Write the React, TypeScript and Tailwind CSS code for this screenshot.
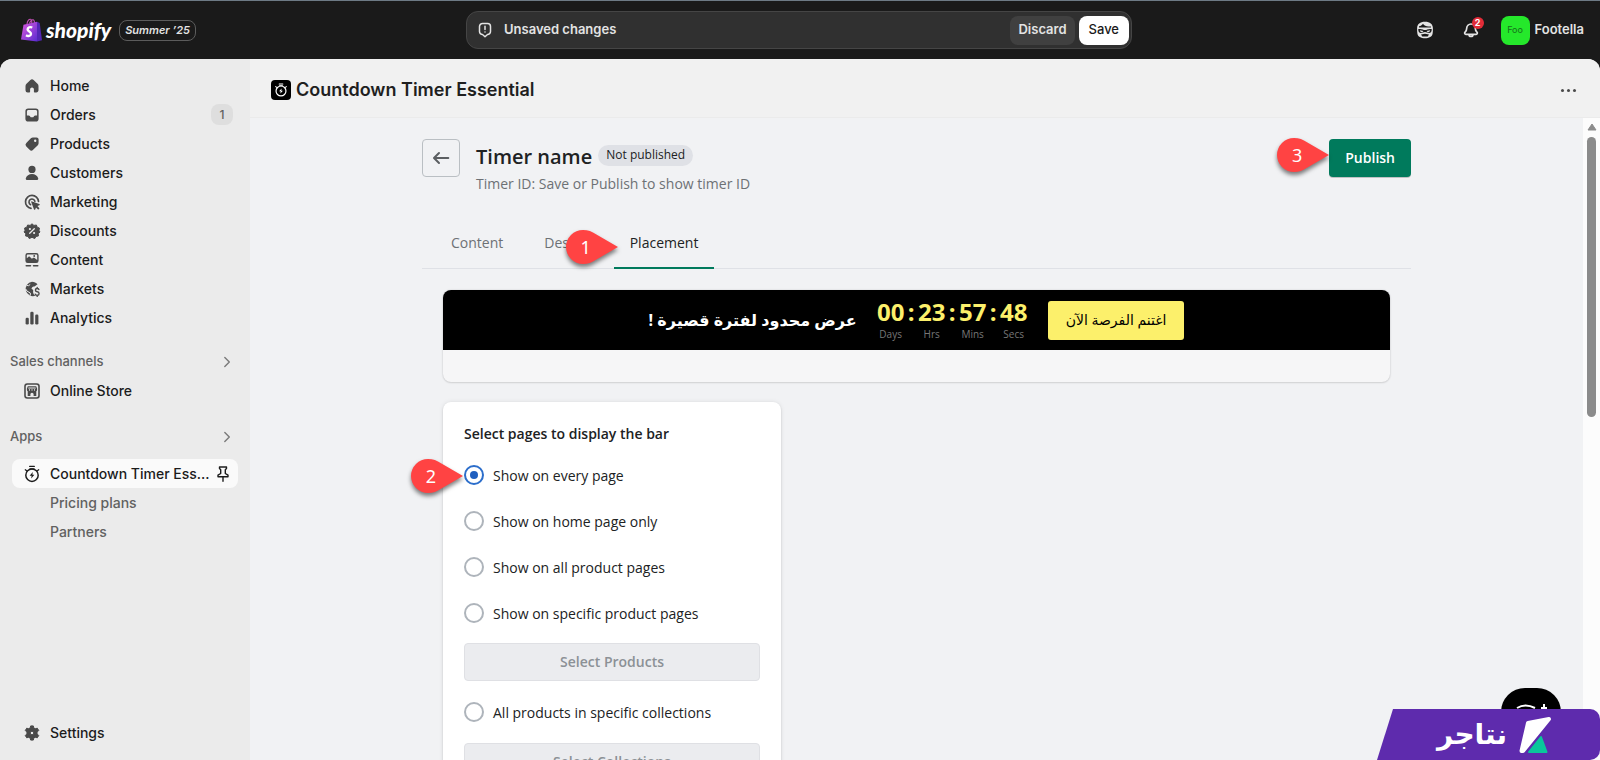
import { useState, type ReactNode } from "react";

const shell = "font-[Inter,'Liberation_Sans',sans-serif]";
const page = "font-['Open_Sans','Noto_Sans','DejaVu_Sans',sans-serif]";

function Icon({ children, className = "size-5" }: { children: ReactNode; className?: string }) {
  return (
    <svg viewBox="0 0 20 20" className={`shrink-0 ${className}`} fill="currentColor" aria-hidden="true">
      {children}
    </svg>
  );
}

const stroke = { fill: "none", stroke: "currentColor", strokeWidth: 1.5, strokeLinecap: "round", strokeLinejoin: "round" } as const;

const icons = {
  home: (
    <path d="M8.4 4.1a2.3 2.3 0 0 1 3.2 0l3.9 3.6c.6.6 1 1.4 1 2.3v4.3c0 1.2-1 2.2-2.2 2.2h-1.600a.8.8 0 0 1-.8-.8v-2.400a1.900 1.900 0 0 0-3.800 0v2.400c0 .5-.3.8-.8.8H5.700a2.200 2.200 0 0 1-2.200-2.200V10c0-.9.400-1.700 1-2.300z" />
  ),
  orders: (
    <path
      fillRule="evenodd"
      d="M6.200 3.500h7.600a2.800 2.800 0 0 1 2.800 2.800v7.500a2.800 2.800 0 0 1-2.800 2.800H6.200a2.800 2.800 0 0 1-2.800-2.800V6.300a2.800 2.800 0 0 1 2.800-2.800zM6.400 5c-.8 0-1.500.7-1.500 1.500v3.900h1.800c.5 0 .9.200 1.200.6l.6.9c.2.200.4.300.7.300h1.600c.3 0 .5-.1.7-.3l.6-.9c.3-.4.700-.6 1.200-.6h1.800V6.500c0-.8-.7-1.500-1.500-1.500z"
    />
  ),
  products: (
    <path
      fillRule="evenodd"
      d="M10.900 3.500h3.600c1.200 0 2.100.9 2.100 2.100v3.600c0 .8-.3 1.500-.8 2.000l-4.700 4.600a2.500 2.500 0 0 1-3.500 0l-3.300-3.300a2.500 2.500 0 0 1 0-3.500l4.600-4.700c.5-.5 1.300-.8 2.000-.8zm2.300 4.500a1.200 1.200 0 1 0 0-2.400 1.200 1.200 0 0 0 0 2.400z"
    />
  ),
  customers: (
    <>
      <circle cx="10" cy="6.400" r="3.600" />
      <path d="M3.800 15.200c.7-2.500 3.200-4.200 6.200-4.200s5.500 1.700 6.200 4.200c.3 1-.5 1.800-1.500 1.800H5.300c-1 0-1.800-.8-1.500-1.800z" />
    </>
  ),
  marketing: (
    <>
      <path {...stroke} strokeWidth="1.700" d="M9 16.300A6.500 6.500 0 1 1 16.500 9.400" />
      <path {...stroke} strokeWidth="1.600" d="M8.600 12.700a3 3 0 1 1 4.300-3.400" />
      <path d="M10.100 9.400l7.200 2.700c.6.200.6 1 0 1.200l-1.900.8 1.800 1.800c.3.300.3.600 0 .9l-.5.500c-.3.300-.6.300-.9 0L14 15.500l-.8 1.900c-.2.600-1 .5-1.200 0l-2.700-7.200c-.2-.5.300-1 .8-.8z" />
    </>
  ),
  discounts: (
    <>
      <path
        stroke="currentColor"
        strokeLinejoin="round"
        d="M10 2.800l1.900 1.600 2.500-.4.800 2.200 2.200.8-.4 2.400 1 1.600-1.800 1.600.2 2.400-2.400.4-1.300 2.200L10 16.300l-2.700 1.300L6 15.400l-2.400-.4.200-2.400L2 11l1-1.600L2.600 7l2.200-.8.800-2.200 2.500.4z"
      />
      <path stroke="#ebebeb" strokeWidth="1.300" strokeLinecap="round" d="M7.700 12.300l4.600-4.600" />
      <circle cx="7.900" cy="8" r="1.100" fill="#ebebeb" />
      <circle cx="12.100" cy="12" r="1.100" fill="#ebebeb" />
    </>
  ),
  content: (
    <>
      <path
        fillRule="evenodd"
        d="M5.700 3h8.600a2.300 2.300 0 0 1 2.300 2.300v5.400a2.300 2.300 0 0 1-2.300 2.300H5.700a2.300 2.300 0 0 1-2.300-2.300V5.300A2.300 2.300 0 0 1 5.700 3zm0 1.400a.9.900 0 0 0-.9.900v3l1.500-1.400c.5-.4 1.200-.4 1.700 0l1.900 1.800 1-.7c.5-.4 1.200-.4 1.700 0l2.600 1.900V5.300a.9.900 0 0 0-.9-.9zm6.500 2.500a.9.900 0 1 0 0-1.800.9.900 0 0 0 0 1.800z"
      />
      <path {...stroke} d="M4.200 15.800h4.300M11.500 15.800h4.300" />
    </>
  ),
  markets: (
    <>
      <path d="M10 2.700c2.200 0 4.200 1 5.500 2.600l-1.300.9c-1 .7-1.500 1.300-2.600 1.300-.9 0-1.400.8-1.900 1.400-.5.700.3 1.300.9 1.500 1 .4.500 1.300.5 2.300 0 1.300.4 2.400 1.400 3.200l1 .9A7.300 7.300 0 1 1 10 2.700z" />
      <path stroke="#ebebeb" strokeWidth="1" fill="none" d="M4.700 6.200l1.800.5 1.700-1.200M8.300 16.500V14L5 12.100 3.700 10" />
      <path {...stroke} strokeWidth="1.400" d="M16.900 10.500c-.3-.7-1-1-1.700-1-2.400 0-2.400 3 0 3.300 2.600.3 2.400 3.500 0 3.500-.9 0-1.600-.4-1.900-1.100M15.200 8.500v1M15.200 16.400v1" />
    </>
  ),
  analytics: (
    <>
      <rect x="8.300" y="3.700" width="3.300" height="12.800" rx="1.300" />
      <rect x="13.200" y="6.500" width="3.200" height="10" rx="1.300" />
      <rect x="3.600" y="9.800" width="3.200" height="6.700" rx="1.300" />
    </>
  ),
  store: (
    <>
      <path
        fillRule="evenodd"
        d="M5.200 2.300h9.600a3 3 0 0 1 3 3v9.500a3 3 0 0 1-3 3H5.200a3 3 0 0 1-3-3V5.300a3 3 0 0 1 3-3zm.3 1.500c-1 0-1.700.7-1.700 1.700v9.100c0 1 .7 1.700 1.700 1.700h9c1 0 1.700-.7 1.700-1.700V5.500c0-1-.7-1.700-1.700-1.700z"
      />
      <path fillRule="evenodd" d="M5.800 5.300h8.400l.9 2.300v1.200c0 .7-.3 1.200-.8 1.500V15h-2.700v-1.700a1.600 1.600 0 0 0-3.200 0V15H5.700v-4.700c-.5-.3-.8-.8-.8-1.500V7.600zm.7 1.200l-.4 1h7.800l-.4-1z" />
      <path stroke="#ebebeb" strokeWidth=".9" d="M7.500 8.200v1.500M10 8.200v1.500M12.500 8.200v1.500" />
    </>
  ),
  settings: (
    <path
      fillRule="evenodd"
      d="M8.700 2.900h2.600l.6 2.200 1.200.7 2.200-.6 1.400 2.300-1.600 1.600v1.800l1.600 1.600-1.400 2.300-2.200-.6-1.200.7-.6 2.200H8.700L8 14.900l-1.100-.7-2.200.6-1.400-2.300 1.600-1.600V9.100L3.300 7.500l1.400-2.300 2.200.6L8 5.100zM10 11.800a1.800 1.800 0 1 0 0-3.600 1.800 1.800 0 0 0 0 3.600z"
      stroke="currentColor"
      strokeLinejoin="round"
    />
  ),
  timer: (
    <>
      <circle {...stroke} cx="10" cy="11.200" r="6.200" />
      <path {...stroke} strokeWidth="1.300" d="M7.700 2.400h4.600M8 4.800h4M3.300 5.800l1.400 1M16.700 5.800l-1.400 1" />
      <path d="M10.800 8l-3.200 3.700h2L9.200 14.500l3.200-3.700h-2z" />
    </>
  ),
  pin: (
    <path {...stroke} strokeWidth="1.400" d="M6.500 3h7v1.600l-1.200 1.200v3.700l2.700 1.700v1.600H5v-1.600l2.700-1.700V5.800L6.500 4.600zM10 13v4.300" />
  ),
  chevron: <path {...stroke} strokeWidth="1.400" d="M7.800 5.500l4.500 4.500-4.500 4.500" />,
  back: <path {...stroke} strokeWidth="2" d="M17.300 10H3.200M8 5L3 10l5 5" />,
};

const nav: { label: string; icon: ReactNode; count?: number }[] = [
  { label: "Home", icon: icons.home },
  { label: "Orders", icon: icons.orders, count: 1 },
  { label: "Products", icon: icons.products },
  { label: "Customers", icon: icons.customers },
  { label: "Marketing", icon: icons.marketing },
  { label: "Discounts", icon: icons.discounts },
  { label: "Content", icon: icons.content },
  { label: "Markets", icon: icons.markets },
  { label: "Analytics", icon: icons.analytics },
];

function NavItem({ label, icon, count }: { label: string; icon?: ReactNode; count?: number }) {
  return (
    <a href="#" className="flex h-[29px] items-center gap-2 pr-[5px] pl-[10px] text-[#1c1c1c]">
      <Icon className="size-5 text-[#4a4a4a]">{icon}</Icon>
      <span className="flex-1">{label}</span>
      {count !== undefined && (
        <span className="flex h-[21px] w-[22px] items-center justify-center rounded-lg bg-[#dedede] text-xs text-[#616161]">{count}</span>
      )}
    </a>
  );
}

function SectionTitle({ children }: { children: ReactNode }) {
  return (
    <button type="button" className="flex h-[29px] w-full items-center justify-between pr-px text-[13px] font-medium text-[#616161]">
      {children}
      <Icon className="size-5 text-[#7a7a7a]">{icons.chevron}</Icon>
    </button>
  );
}

function Sidebar() {
  return (
    <nav className="flex w-[250px] shrink-0 flex-col bg-[#ebebeb] px-3 pt-3 pb-[13px] text-sm font-[450]">
      <div>
        {nav.map((n) => (
          <NavItem key={n.label} {...n} />
        ))}
      </div>
      <div className="-ml-[2px] mt-[15px]">
        <SectionTitle>Sales channels</SectionTitle>
      </div>
      <NavItem label="Online Store" icon={icons.store} />
      <div className="-ml-[2px] mt-[17px]">
        <SectionTitle>Apps</SectionTitle>
      </div>
      <a href="#" title="Countdown Timer Essential" className="mt-2 flex h-[29px] items-center gap-2 rounded-lg bg-[#fafafa] pr-[5px] pl-[10px] font-medium text-[#1c1c1c]">
        <Icon>{icons.timer}</Icon>
        <span className="-mr-2 flex-1 whitespace-nowrap">Countdown Timer Ess...</span>
        <Icon>{icons.pin}</Icon>
      </a>
      <a href="#" className="flex h-[29px] items-center pl-[38px] text-[#616161]">Pricing plans</a>
      <a href="#" className="flex h-[29px] items-center pl-[38px] text-[#616161]">Partners</a>
      <div className="mt-auto">
        <NavItem label="Settings" icon={icons.settings} />
      </div>
    </nav>
  );
}

function TopBar() {
  return (
    <header className="grid h-[59px] shrink-0 grid-cols-[1fr_minmax(0,666px)_1fr] items-center border-t border-[#6d7a85] bg-[#1a1a1a] pr-4 pl-[14px] text-[#e3e3e3]">
      <div className="flex items-center pl-[7px]">
        <svg viewBox="0 0 21 24" className="h-6 w-[21px]" aria-hidden="true">
          <defs>
            <linearGradient id="bag" x1="0" y1="0" x2="1" y2="1">
              <stop offset="0" stopColor="#e05adf" />
              <stop offset="1" stopColor="#5a2bd0" />
            </linearGradient>
          </defs>
          <path fill="none" stroke="#c24fb5" strokeWidth="1.100" d="M6 6c.3-3 2-5 3.500-4.700C11 1.600 11 4 10.500 5.500M8.500 5.500C9.500 2 12 .8 13 2.500c.4.800.5 1.700.5 2.500" />
          <path fill="url(#bag)" d="M2.500 6.700L16 3.800v19.700L0 21.500z" />
          <path fill="#5326b5" d="M16 3.800l2.700 1.100L21 22.300l-5 1.200z" />
          <path fill="none" stroke="#fff" strokeWidth="2.400" d="M11.300 9.500C9 8.600 6.700 9.400 6.600 11.300c-.1 2.300 3.600 2.300 3.400 4.700-.2 2-2.800 2.500-5 1.200" />
        </svg>
        <span className="ml-1 font-[Lato,sans-serif] text-[21px] leading-7 font-black text-white italic">shopify</span>
        <span className="ml-2 flex h-[21px] items-center rounded-lg border border-[#5c5c5c] px-[5px] text-[11px] font-semibold text-[#e3e3e3] italic">Summer ’25</span>
      </div>
      <div className="flex h-[38px] items-center gap-[4px] rounded-xl border border-[#454545] bg-[#303030] pr-[2px] pl-[10px] text-[13px] font-semibold">
        <svg viewBox="0 0 16 16" className="mr-[7px] size-4" {...stroke} aria-hidden="true">
          <path d="M5.500 1.500h5a3 3 0 0 1 3 3v5a3 3 0 0 1-3 3l-2.500 2.300-2.500-2.300a3 3 0 0 1-3-3v-5a3 3 0 0 1 3-3zM8 4.300v3.200M8 9.900v.1" />
        </svg>
        <span className="flex-1">Unsaved changes</span>
        <button type="button" className="h-[29px] rounded-lg bg-[#404040] px-2">Discard</button>
        <button type="button" className="h-[29px] rounded-lg bg-white px-[10px] font-medium text-[#1a1a1a]">Save</button>
      </div>
      <div className="flex items-center justify-end">
        <button type="button" aria-label="Assistant" className="mr-[27px]">
          <svg viewBox="0 0 18 18" className="size-[18px]" aria-hidden="true">
            <path fill="#e3e3e3" d="M9 .8c5 0 7.800 2.400 7.900 6.200.1 2 0 3.800-.3 5.700-.5 2.900-3.500 4.500-7.600 4.500s-7.100-1.600-7.600-4.500C1.100 10.800 1 9 1.100 7 1.200 3.200 4 .8 9 .8z" />
            <path fill="#1a1a1a" d="M3 5.300c2-.3 3.300-1.300 4-2.500l1 1.200c1.700 1.200 4.200 1.600 7 1.500v.9H3zM2.300 7.900c2.200 0 4.300.2 5.500 1h2.400c1.200-.8 3.300-1 5.500-1 .1 2.500-.8 4-2.700 4-1.500 0-2.500-.9-4-.9s-2.500.9-4 .9c-1.900 0-2.800-1.500-2.700-4zM5 13.500l4-.8 4 .8-1.300 1.900H6.300z" />
            <path fill="#e3e3e3" d="M3.800 9.300l3.700.8-1.200 1.100c-1.200.3-2.200-.5-2.500-1.900zM14.200 9.300l-3.700.8 1.200 1.100c1.200.3 2.200-.5 2.500-1.900z" />
          </svg>
        </button>
        <button type="button" aria-label="Notifications" className="relative mr-5">
          <Icon className="size-5">
            <path {...stroke} strokeWidth="1.700" d="M10 4a4.300 4.300 0 0 0-4.300 4.300c0 2-.6 2.800-1.600 3.800-.9.900-.4 2.200.8 2.200h10.200c1.200 0 1.700-1.300.8-2.200-1-1-1.600-1.800-1.600-3.800A4.300 4.300 0 0 0 10 4zM8 14.500a2 2 0 0 0 4 0" />
          </Icon>
          <span className="absolute -top-[3px] left-[11px] flex size-3 items-center justify-center rounded-full bg-[#e22c38] text-[9px] font-bold text-white">2</span>
        </button>
        <button type="button" className="flex items-center gap-[5px]">
          <span className="flex size-[29px] items-center justify-center rounded-lg bg-[#25e82b] text-[9px] text-[#14701a]">Foo</span>
          <span className="text-[13px] font-semibold">Footella</span>
        </button>
      </div>
    </header>
  );
}

function Marker({ n, className }: { n: number; className: string }) {
  return (
    <span className={`pointer-events-none absolute z-10 flex h-[34px] w-[52px] items-center ${className}`}>
      <svg viewBox="0 0 52 34" className="absolute inset-0 overflow-visible drop-shadow-[0_3px_2px_rgba(0,0,0,0.5)]" aria-hidden="true">
        <path fill="#ff4343" d="M17 0c5 0 9 1.500 13 4.300L52 17 30 29.700C26 32.500 22 34 17 34a17 17 0 0 1 0-34z" />
      </svg>
      <span className="relative w-[40px] text-center font-['Noto_Sans',sans-serif] text-lg leading-6 font-normal text-white">{n}</span>
    </span>
  );
}

function Countdown() {
  const parts = [
    ["00", "Days"],
    ["23", "Hrs"],
    ["57", "Mins"],
    ["48", "Secs"],
  ];
  return (
    <div className="flex text-[#fcf06b]">
      {parts.map(([v, l], i) => (
        <div key={l} className="flex">
          {i > 0 && <span className="w-[13px] text-center text-2xl leading-7 font-bold">:</span>}
          <div className="flex w-7 flex-col items-center">
            <span className="text-2xl leading-7 font-bold">{v}</span>
            <span className="text-[10px] leading-4 text-[#777]">{l}</span>
          </div>
        </div>
      ))}
    </div>
  );
}

function Preview() {
  return (
    <section className="overflow-hidden rounded-lg bg-[#f6f6f7] shadow-[0_0_2px_rgba(0,0,0,0.15),0_1px_2px_rgba(0,0,0,0.1)]">
      <div className="flex min-h-[60px] flex-wrap items-center justify-center gap-5 bg-black">
        <p dir="rtl" lang="ar" className="text-base leading-7 font-bold text-white">عرض محدود لفترة قصيرة !</p>
        <Countdown />
        <button type="button" dir="rtl" lang="ar" className="h-[39px] rounded-[3px] bg-[#fcf06b] px-[18px] text-sm text-black">
          اغتنم الفرصة الآن
        </button>
      </div>
      <div className="h-8" />
    </section>
  );
}

function Choice({ label, checked, onChange, marker }: { label: string; checked: boolean; onChange: () => void; marker?: ReactNode }) {
  return (
    <label className="relative flex h-[46px] items-center gap-[9px] text-sm text-[#202223]">
      {marker}
      <input
        type="radio"
        name="placement"
        checked={checked}
        onChange={onChange}
        className="flex size-5 shrink-0 appearance-none items-center justify-center rounded-full border-2 border-[#aeb4bb] bg-white before:size-2 before:rounded-full checked:border-[#2c6ecb] checked:before:bg-[#1f5fbf]"
      />
      <span className="pt-px">{label}</span>
    </label>
  );
}

const disabledButton = "h-[38px] w-full rounded border border-[#dfe0e4] bg-[#ebecef] text-sm font-semibold text-[#8c9196]";

function Placement() {
  const [choice, setChoice] = useState("Show on every page");
  const option = (label: string, marker?: ReactNode) => (
    <Choice label={label} checked={choice === label} onChange={() => setChoice(label)} marker={marker} />
  );
  return (
    <section className="mt-5 w-[338px] rounded-lg bg-white px-[21px] pt-[22px] pb-5 shadow-[0_0_5px_rgba(23,24,24,0.08),0_1px_2px_rgba(0,0,0,0.15)]">
      <h2 className="mb-2 text-sm leading-5 font-semibold text-[#202223]">Select pages to display the bar</h2>
      {option("Show on every page", <Marker n={2} className="-left-[53px] top-[7px]" />)}
      {option("Show on home page only")}
      {option("Show on all product pages")}
      {option("Show on specific product pages")}
      <button type="button" disabled className={`mt-[7px] mb-2 ${disabledButton}`}>Select Products</button>
      {option("All products in specific collections")}
      <button type="button" disabled className={`mt-2 ${disabledButton}`}>Select Collections</button>
    </section>
  );
}

function TimerPage() {
  return (
    <main className={`min-w-0 flex-1 overflow-hidden px-5 pt-[21px] text-[#202223] ${page}`}>
      <div className="mx-auto max-w-[989px]">
        <div className="flex items-start">
          <button type="button" aria-label="Back" className="flex size-[38px] items-center justify-center rounded border border-[#babfc3] text-[#5c5f62]">
            <Icon>{icons.back}</Icon>
          </button>
          <div className="ml-4 flex-1">
            <div className="flex h-9 items-center gap-[6px]">
              <h1 className="text-xl leading-7 font-semibold">Timer name</h1>
              <span className="mb-1 flex h-[21px] items-center rounded-full bg-[#dfe1e6] px-2 text-xs">Not published</span>
            </div>
            <p className="text-sm leading-[18px] text-[#6d7175]">Timer ID: Save or Publish to show timer ID</p>
          </div>
          <div className="relative">
            <Marker n={3} className="-left-[52px] -top-px" />
            <button type="button" className="h-[38px] rounded bg-[#007a5c] px-4 text-sm font-semibold text-white shadow-[0_1px_0_rgba(0,0,0,0.2)]">Publish</button>
          </div>
        </div>
        <div role="tablist" className="mt-[23px] flex h-[53px] gap-[9px] border-b border-[#dfe1e6] pl-[13px] text-sm text-[#6d7175]">
          <button type="button" role="tab" className="px-4 pt-px">Content</button>
          <button type="button" role="tab" className="px-4 pt-px">Design</button>
          <button type="button" role="tab" aria-selected="true" className="relative -mb-px border-b-2 border-[#007a5c] px-4 pt-[2px] text-[#202223]">
            <Marker n={1} className="-left-[48px] top-[14px]" />
            Placement
          </button>
        </div>
        <div className="px-[21px] pt-[21px]">
          <Preview />
          <Placement />
        </div>
      </div>
    </main>
  );
}

function BrandTag() {
  return (
    <div className="absolute right-0 bottom-0 z-20">
      <div className="absolute -top-[21px] right-[39px] h-[40px] w-[60px] overflow-hidden rounded-t-[24px] bg-black">
        <svg viewBox="0 0 60 40" fill="none" stroke="#fff" strokeWidth="2" aria-hidden="true">
          <path d="M16 20c5-3 12-3 18 0M43 16v6M40 20h6" />
        </svg>
      </div>
      <div className="relative flex h-[51px] w-[223px] items-center overflow-hidden rounded-r-[10px]">
        <svg viewBox="0 0 223 51" className="absolute inset-0" aria-hidden="true">
          <path fill="#5e2bad" d="M16 0H223V51H0z" />
        </svg>
        <span lang="ar" className="relative ml-[60px] flex-1 font-['DejaVu_Sans',sans-serif] text-[28px] leading-10 font-bold text-white">نتاجر</span>
        <svg viewBox="0 0 34 38" className="relative mr-[48px] h-[38px] w-[34px]" aria-hidden="true">
          <path fill="#fff" stroke="#fff" strokeWidth="4" strokeLinejoin="round" d="M10 7L31 3 5 35H3.500z" />
          <path fill="#0ac69b" stroke="#0ac69b" strokeWidth="2" strokeLinejoin="round" d="M23 21l5.500 15H11z" />
        </svg>
      </div>
    </div>
  );
}

export default function App() {
  return (
    <div className={`relative flex h-screen flex-col overflow-hidden bg-[#1a1a1a] ${shell}`}>
      <TopBar />
      <div className="flex min-h-0 flex-1 overflow-hidden rounded-t-xl bg-[#f1f2f4]">
        <Sidebar />
        <div className="flex min-w-0 flex-1 flex-col">
          <div className="flex h-[59px] shrink-0 items-center gap-[5px] border-b border-[#ebebeb] bg-[#f1f1f1] pt-1 pr-[22px] pl-[21px]">
            <span className="flex size-5 items-center justify-center rounded bg-black text-white">
              <Icon className="size-4">{icons.timer}</Icon>
            </span>
            <h2 className="flex-1 text-lg font-semibold text-[#1f1f1f]">Countdown Timer Essential</h2>
            <button type="button" aria-label="More actions" className="flex gap-[3px] p-[2px]">
              <span className="size-[3px] rounded-full bg-[#4a4a4a]" />
              <span className="size-[3px] rounded-full bg-[#4a4a4a]" />
              <span className="size-[3px] rounded-full bg-[#4a4a4a]" />
            </button>
          </div>
          <div className="flex min-h-0 flex-1">
            <TimerPage />
            <div className="flex w-[17px] shrink-0 flex-col items-center bg-[#fcfcfc] pt-[5px]">
              <svg viewBox="0 0 10 8" className="h-2 w-[10px]" aria-hidden="true">
                <path fill="#8b8b8b" stroke="#8b8b8b" strokeLinejoin="round" d="M5 1l4 6H1z" />
              </svg>
              <div className="mt-[6px] h-[44%] w-[9px] rounded-full bg-[#8b8b8b]" />
            </div>
          </div>
        </div>
      </div>
      <BrandTag />
    </div>
  );
}
